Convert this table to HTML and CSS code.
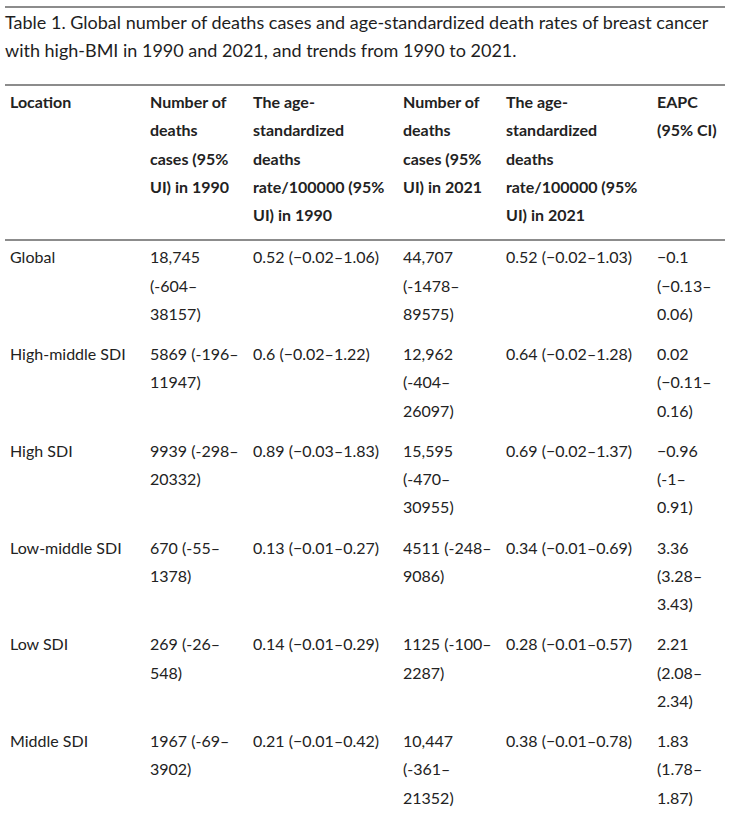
FILE: index.html
```html
<!DOCTYPE html>
<html lang="en">
<head>
<meta charset="utf-8">
<title>Table 1</title>
<link rel="stylesheet" href="styles.css">
</head>
<body>
<div class="wrap">
  <p class="caption">Table 1. Global number of deaths cases and age-standardized death rates of breast cancer<br>with high-BMI in 1990 and 2021, and trends from 1990 to 2021.</p>
  <table class="data">
    <colgroup>
      <col class="c1"><col class="c2"><col class="c3"><col class="c4"><col class="c5"><col class="c6">
    </colgroup>
    <thead>
      <tr>
        <th>Location</th>
        <th>Number of<br>deaths<br>cases (95%<br>UI) in 1990</th>
        <th>The age-<br>standardized<br>deaths<br>rate/100000 (95%<br>UI) in 1990</th>
        <th>Number of<br>deaths<br>cases (95%<br>UI) in 2021</th>
        <th>The age-<br>standardized<br>deaths<br>rate/100000 (95%<br>UI) in 2021</th>
        <th>EAPC<br>(95% CI)</th>
      </tr>
    </thead>
    <tbody>
      <tr>
        <td>Global</td>
        <td>18,745<br>(-604–<br>38157)</td>
        <td>0.52 (−0.02–1.06)</td>
        <td>44,707<br>(-1478–<br>89575)</td>
        <td>0.52 (−0.02–1.03)</td>
        <td>−0.1<br>(−0.13–<br>0.06)</td>
      </tr>
      <tr>
        <td>High-middle SDI</td>
        <td>5869 (-196–<br>11947)</td>
        <td>0.6 (−0.02–1.22)</td>
        <td>12,962<br>(-404–<br>26097)</td>
        <td>0.64 (−0.02–1.28)</td>
        <td>0.02<br>(−0.11–<br>0.16)</td>
      </tr>
      <tr>
        <td>High SDI</td>
        <td>9939 (-298–<br>20332)</td>
        <td>0.89 (−0.03–1.83)</td>
        <td>15,595<br>(-470–<br>30955)</td>
        <td>0.69 (−0.02–1.37)</td>
        <td>−0.96<br>(-1–<br>0.91)</td>
      </tr>
      <tr>
        <td>Low-middle SDI</td>
        <td>670 (-55–<br>1378)</td>
        <td>0.13 (−0.01–0.27)</td>
        <td>4511 (-248–<br>9086)</td>
        <td>0.34 (−0.01–0.69)</td>
        <td>3.36<br>(3.28–<br>3.43)</td>
      </tr>
      <tr>
        <td>Low SDI</td>
        <td>269 (-26–<br>548)</td>
        <td>0.14 (−0.01–0.29)</td>
        <td>1125 (-100–<br>2287)</td>
        <td>0.28 (−0.01–0.57)</td>
        <td>2.21<br>(2.08–<br>2.34)</td>
      </tr>
      <tr>
        <td>Middle SDI</td>
        <td>1967 (-69–<br>3902)</td>
        <td>0.21 (−0.01–0.42)</td>
        <td>10,447<br>(-361–<br>21352)</td>
        <td>0.38 (−0.01–0.78)</td>
        <td>1.83<br>(1.78–<br>1.87)</td>
      </tr>
    </tbody>
  </table>
</div>
</body>
</html>
```

FILE: styles.css
```css
html, body {
  margin: 0;
  padding: 0;
  background: #ffffff;
}

body {
  font-family: Lato, "Noto Sans", sans-serif;
  color: #222222;
}

.wrap {
  width: 720px;
  margin: 0 5px;
  padding-top: 6px;
}

.caption {
  margin: 0;
  border-top: 2px solid #8c8c8c;
  font-size: 18px;
  line-height: 28px;
  color: #1e1e1e;
  white-space: nowrap;
}

.data {
  margin-top: 20px;
  width: 720px;
  table-layout: fixed;
  border-collapse: collapse;
  font-size: 16px;
  line-height: 28.25px;
}

.c1 { width: 140px; }
.c2 { width: 103px; }
.c3 { width: 150px; }
.c4 { width: 103px; }
.c5 { width: 151px; }
.c6 { width: 73px; }

.data thead tr {
  border-top: 2px solid #8c8c8c;
  border-bottom: 2px solid #8c8c8c;
}

.data th {
  text-align: left;
  vertical-align: top;
  font-weight: 700;
  padding: 2px 5px 10px 5px;
  white-space: nowrap;
}

.data td {
  vertical-align: top;
  padding: 2px 5px 10px 5px;
  white-space: nowrap;
}
```
